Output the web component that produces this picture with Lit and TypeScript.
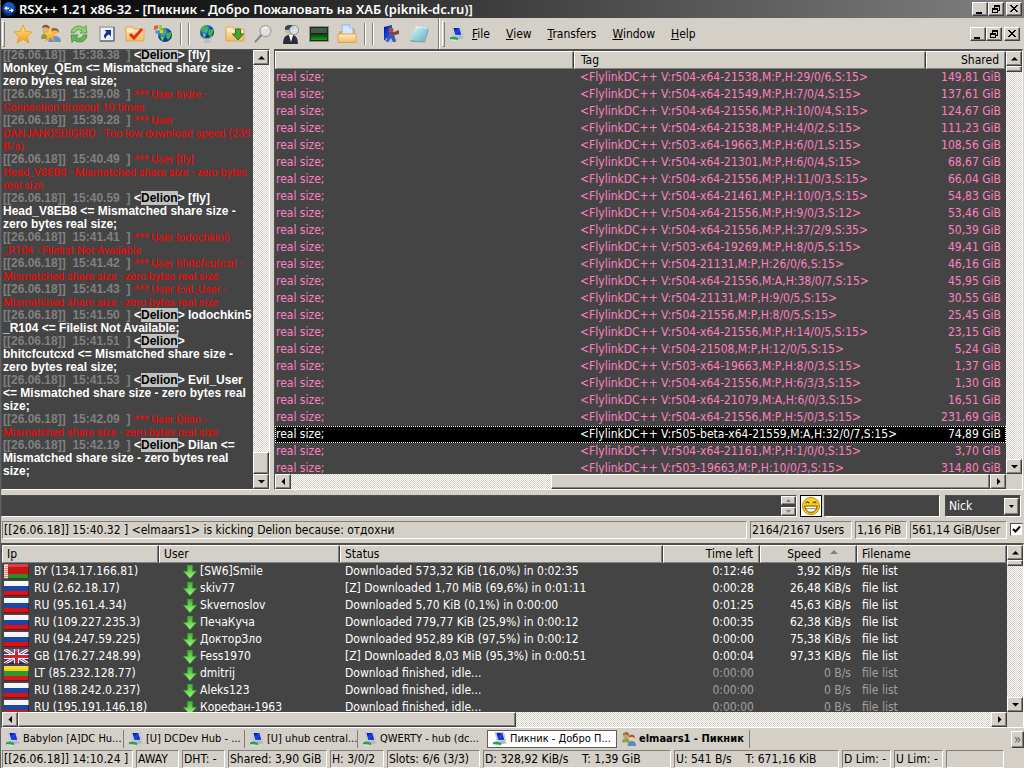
import { LitElement, html, css, svg, nothing } from "lit";
import { customElement, property } from "lit/decorators.js";
import { classMap } from "lit/directives/class-map.js";
import { styleMap } from "lit/directives/style-map.js";

const base = css`
  * { box-sizing: border-box; }
  svg { display: block; flex: none; }
  button { font: inherit; color: inherit; margin: 0; padding: 0; }
  .raised {
    background: #d4d0c8;
    border: 1px solid;
    border-color: #fff #404040 #404040 #fff;
    box-shadow: inset -1px -1px 0 #808080;
  }
  .center { display: flex; align-items: center; justify-content: center; }
`;

@customElement("scroll-bar")
class ScrollBar extends LitElement {
  @property({ type: Boolean, reflect: true }) horizontal = false;
  @property({ type: Number }) before = 0;
  @property({ type: Number }) size = 10;
  @property({ type: Number }) after = 90;
  static styles = [base, css`
    :host { display: flex; flex-direction: column; width: 16px; flex: none; background: repeating-conic-gradient(#fff 0 25%, #d4d0c8 0 50%) 0 0 / 2px 2px; }
    :host([horizontal]) { flex-direction: row; width: auto; height: 15px; }
    .arrow { width: 16px; height: 15px; flex: none; }
    .thumb { min-width: 6px; min-height: 6px; }
  `];
  render() {
    const arrow = (d: string, label: string) => html`<button class="arrow raised center" aria-label=${label}>
      <svg width="7" height="7" viewBox="0 0 7 7"><path d=${d} fill="#000"/></svg></button>`;
    const h = this.horizontal;
    return html`
      ${arrow(h ? "M5 0V7L1.5 3.5Z" : "M0 5.500H7L3.500 2Z", h ? "Scroll left" : "Scroll up")}
      <div style=${styleMap({ flex: `${this.before} 0 0` })}></div>
      <div class="thumb raised" style=${styleMap({ flex: `${this.size} 0 0` })}></div>
      <div style=${styleMap({ flex: `${this.after} 0 0` })}></div>
      ${arrow(h ? "M2 0V7L5.500 3.500Z" : "M0 2H7L3.500 5.500Z", h ? "Scroll right" : "Scroll down")}`;
  }
}

const defs = svg`<defs>
  <linearGradient id="gold" x2="0" y2="1"><stop stop-color="#ffe98a"/><stop offset="1" stop-color="#f09a1c"/></linearGradient>
  <linearGradient id="fold" x2="0" y2="1"><stop stop-color="#fdeec0"/><stop offset="1" stop-color="#f3b963"/></linearGradient>
  <radialGradient id="sea" cx=".35" cy=".3"><stop stop-color="#a8dcff"/><stop offset=".5" stop-color="#2b7fd8"/><stop offset="1" stop-color="#0a3a92"/></radialGradient>
  <linearGradient id="scr" x2="1" y2="1"><stop stop-color="#000f80"/><stop offset=".5" stop-color="#1746f0"/><stop offset="1" stop-color="#0b1c9c"/></linearGradient>
  <linearGradient id="pad" x2="1" y2="1"><stop stop-color="#e6fbfd"/><stop offset="1" stop-color="#57b3c4"/></linearGradient>
  <linearGradient id="leaf" x2="0" y2="1"><stop stop-color="#3fae2a"/><stop offset="1" stop-color="#a4f58a"/></linearGradient>
  <linearGradient id="grn" x2="0" y2="1"><stop stop-color="#0c2410"/><stop offset="1" stop-color="#1f9a18"/></linearGradient>
</defs>`;

const globe = svg`<circle cx="10" cy="8" r="7" fill="url(#sea)"/><path d="M5 3Q9 0 11 3L9 7L6 8L4 6ZM12 6L16 5Q17 9 13 13L11 10Z" fill="#3fb53c"/><path d="M6 9L9 10L8 14Q5 12 6 9Z" fill="#6ccb3f"/>`;
const folder = svg`<path d="M1 3H8L9 5H19V17H1Z" fill="url(#fold)" stroke="#e0a550"/><path d="M2 7H18" stroke="#fff6d8"/>`;

const icons: Record<string, unknown> = {
  star: svg`<path d="M10 1L12.500 7.300L19 8L14 12.300L16 19L10 15.300L4 19L6 12.300L1 8L7.500 7.300Z" fill="url(#gold)" stroke="#eda129"/>`,
  users: svg`<circle cx="5" cy="5" r="4" fill="#ddb07c"/><path d="M1 4Q2 0 6 1Q9 2 9 5Q5 2 1 4Z" fill="#7b5d2e"/><path d="M0 15Q0 9 5 9Q9 9 10 15Z" fill="#74a24c"/><circle cx="14" cy="8" r="4" fill="#f0c8a0"/><path d="M10 8Q10 3 14 4Q18 4 18 9Q15 5 10 8Z" fill="#a06a34"/><path d="M7 18Q8 12 14 12Q20 12 20 18Z" fill="#6d93c6"/><path d="M9 3L11 8L16 8.500L12 12L13.500 17L9 14L4.500 17L6 12L2 8.500L7 8Z" fill="url(#gold)" stroke="#e69a28" stroke-width=".6"/>`,
  refresh: svg`<path d="M2 9Q3 2 10 2Q13 2 15 4L17 1.500L18 9H11L13 6.500Q8 4 5.500 9Z" fill="#8fce72" stroke="#4c9b3e" stroke-width=".8"/><path d="M18 11Q17 18 10 18Q7 18 5 16L3 18.500L2 11H9L7 13.500Q12 16 14.500 11Z" fill="#63b552" stroke="#3d8935" stroke-width=".8"/>`,
  shortcut: svg`<rect x="3" y="3" width="14" height="14" fill="#eef1f6" stroke="#7d8796"/><path d="M3 17H17V3" fill="none" stroke="#4c5666"/><path d="M7.500 6H14V12.500L12 10.500Q8.500 12 8.500 15Q5 12 9.500 8Z" fill="#1c2f8c"/>`,
  check: svg`${folder}<path d="M5 10L9 14L17 5" fill="none" stroke="#e22e18" stroke-width="3"/>`,
  world: svg`<g transform="translate(2 3)">${globe}</g><path d="M1 2L5 1V5L1 6Z" fill="#ef5b2a"/><path d="M6 1L9 1V5L6 5Z" fill="#8ccc3d"/><path d="M2 7L6 6V9L3 10Z" fill="#4a90e0"/><path d="M7 6H10V9H7Z" fill="#f7c52f"/>`,
  globe: svg`${globe}<path d="M3 12Q9 18 16 12" fill="none" stroke="#a9aeb6" stroke-width="1.500"/><path d="M8 15H12L14 19H6Z" fill="#b8bdc4"/>`,
  folderdown: svg`${folder}<path d="M10.500 5H15.500V10H18.500L13 16L7.500 10H10.500Z" fill="#4ba32f" stroke="#2c7a1c"/>`,
  search: svg`<circle cx="12.500" cy="7" r="5.500" fill="#dfe1e0" stroke="#8e9194"/><path d="M9 5Q11 3 14 4" stroke="#fff" fill="none"/><path d="M8.500 11L2 18" stroke="#8a827a" stroke-width="2"/>`,
  spy: svg`<circle cx="9" cy="6" r="5" fill="#d0b59c"/><path d="M4 6Q3 1 9 1Q14 1 14 5Z" fill="#3a3f48"/><path d="M2 20Q2 11 8 11L10 14L12 11Q17 12 17 20Z" fill="#2a2e38"/><path d="M8 11L10 18L12 11Z" fill="#fff"/><circle cx="13" cy="6" r="4.500" fill="#d7e6f2" opacity=".9" stroke="#80878f"/>`,
  monitor: svg`<rect x="0.500" y="2.500" width="19" height="15" fill="#1d2b1d" stroke="#8a9088"/><rect x="2" y="4" width="16" height="6" fill="#425a4a"/><rect x="2" y="9" width="16" height="7" fill="url(#grn)"/>`,
  folderdoc: svg`<path d="M2 7H7L8 5H18V18H2Z" fill="#eaa94b"/><path d="M5 1H13L16 4V12H5Z" fill="#d3e6fa" stroke="#8bb5dc"/><path d="M13 1V4H16" fill="#fff" stroke="#8bb5dc"/><path d="M1 10H19V18.500H1Z" fill="url(#fold)" stroke="#e0a550"/>`,
  exit: svg`<path d="M3 3L11 1V18L3 16Z" fill="url(#scr)"/><path d="M4 15L12 12L17 16L9 19Z" fill="#b9bec8"/><circle cx="10" cy="6" r="2.500" fill="#a65238"/><path d="M8 8H13L18 6V10L14 11H8Z" fill="#7d4636"/><path d="M8 10H13L15 18H12L10 14L7 18H5Z" fill="#3d5aae"/>`,
  notepad: svg`<path d="M7 2L19 3L15 17L1 16Z" fill="url(#pad)"/><path d="M1 16L15 17L19 3L19.500 7L16 18.500L2 18Z" fill="#8ea4a9"/><path d="M7 3L18 4" stroke="#fff" stroke-dasharray="1 1"/>`,
  hub: svg`<path d="M3 0L15 0L18 12L6 13Z" fill="#d7dbe4" stroke="#b3b7c3"/><path d="M5 1.500H13.500L16 11L7.500 11.500Z" fill="url(#scr)"/><path d="M8 14L16 12L20 16L10 18Z" fill="#b4b8c2"/><path d="M0 15Q6 12 12 16L11 19Q4 18 0 18Z" fill="#27a05f"/><path d="M1 18L10 19" stroke="#fff"/>`,
  people: svg`<circle cx="6" cy="5" r="4.500" fill="#cda06a"/><path d="M1 5Q1 0 7 0Q11 2 10 6Q6 2 1 5Z" fill="#8a7531"/><path d="M0 15Q0 9 6 9Q11 9 11 15Z" fill="#83a848"/><circle cx="14" cy="8" r="4" fill="#f0c79e"/><path d="M10 8Q10 3 15 4Q19 5 18 9Q15 5 10 8Z" fill="#93582a"/><path d="M8 20Q8 13 14 13Q20 13 20 20Z" fill="#5e89c4"/>`,
  app: svg`<circle cx="10" cy="10" r="10" fill="#0b2a78"/><circle cx="10" cy="8" r="8" fill="#1d57c4"/><path d="M3 9L7 6V8H10V10H7V12ZM17 12L13 9V11H10V13H13V15Z" fill="#fff"/>`,
  smile: svg`<circle cx="10" cy="10" r="9.500" fill="#fcd116" stroke="#b77b00"/><path d="M4 7Q6 4 8 7M12 7Q14 4 16 7" fill="none" stroke="#5b3c00" stroke-width="1.300"/><path d="M3 10H17Q16 17 10 17Q4 17 3 10Z" fill="#fff" stroke="#5b3c00"/><path d="M4 13H16" stroke="#5b3c00" stroke-width=".7"/>`,
  down: svg`<path d="M6.500 0H13.500V9H19.500L10 19.500L.5 9H6.500Z" fill="url(#leaf)" stroke="#2fa01f"/>`,
};

const icon = (name: string, size: number) => html`<svg width=${size} height=${size} viewBox="0 0 20 20" aria-hidden="true">${defs}${icons[name]}</svg>`;

const flag = (code: string) => {
  const stripes = (a: string, b: string, c: string) => svg`<path d="M0 0H25V5H0Z" fill=${a}/><path d="M0 5H25V10H0Z" fill=${b}/><path d="M0 10H25V15H0Z" fill=${c}/>`;
  const art =
    code === "RU" ? stripes("#f4f4f4", "#1c46a6", "#e01010")
    : code === "LT" ? stripes("#f7d00c", "#2c9a34", "#d81818")
    : code === "BY" ? svg`<path d="M0 0H25V10H0Z" fill="#c81414"/><path d="M0 10H25V15H0Z" fill="#2c8a2c"/><path d="M0 0H4V15H0Z" fill="#f2dcdc"/><path d="M1 0V15M3 0V15" stroke="#d43030" stroke-dasharray="1 1"/>`
    : svg`<path d="M0 0H25V15H0Z" fill="#2b3f94"/><path d="M0 0L25 15M25 0L0 15" stroke="#fff" stroke-width="3"/><path d="M0 0L25 15M25 0L0 15" stroke="#d8202c"/><path d="M12.500 0V15M0 7.500H25" stroke="#fff" stroke-width="5"/><path d="M12.500 0V15M0 7.500H25" stroke="#d8202c" stroke-width="3"/>`;
  return html`<svg width="25" height="15" viewBox="0 0 25 15" aria-hidden="true">${art}<path d="M0 1.500H25" stroke="#fff" stroke-width="3" opacity=".2"/><path d="M0 14.500H24.500V0" fill="none" stroke="#000" opacity=".4"/></svg>`;
};

@customElement("window-controls")
class WindowControls extends LitElement {
  static styles = [base, css`
    :host { display: flex; flex: none; }
    button { width: 16px; height: 14px; }
    button:last-child { margin-left: 2px; }
  `];
  render() {
    const b = (label: string, d: string) => html`<button class="raised center" aria-label=${label}>
      <svg width="10" height="10" viewBox="0 0 10 10"><path d=${d} fill="none" stroke="#000" shape-rendering="crispEdges"/></svg></button>`;
    return html`${b("Minimize", "M1 8H7M1 9H7")}
      ${b("Restore", "M3.500 4V1.500H8.500V6.500H7M3 2.500H9M1.500 4.500H6.500V8.500H1.500ZM1 5.500H7")}
      ${b("Close", "M1 1L8 8M2 1L9 8M8 1L1 8M9 1L2 8")}`;
  }
}

@customElement("hub-chat")
class HubChat extends LitElement {
  static styles = [base, css`
    :host { display: flex; min-height: 0; background: #444; }
    .log { flex: 1; min-width: 0; overflow: hidden; display: flex; flex-direction: column; justify-content: flex-end; padding: 0 0 11px 1px; font: 12px/13px "Liberation Sans", Arial, sans-serif; white-space: pre; }
    .line { display: flex; flex: none; height: 13px; color: #fff; font-weight: bold; }
    .red { color: #f00; font: 11px/13px Roboto, sans-serif; }
    .time { flex: none; width: 131px; color: #808080; font: bold 12px/13px "Liberation Sans", Arial, sans-serif; }
    .nick { background: #c0c0c0; color: #000; }
  `];
  render() {
    const t = (time: string) => html`<span class="time">[[26.06.18]]  ${time}  ]</span>`;
    const say = (time: string, first: string, ...rest: string[]) => html`
      <div class="line">${t(time)}<span>&lt;<span class="nick">Delion</span>&gt; ${first}</span></div>
      ${rest.map((r) => html`<div class="line">${r}</div>`)}`;
    const sys = (time: string, first: string, ...rest: string[]) => html`
      <div class="line red">${t(time)}<span>*** User ${first}</span></div>
      ${rest.map((r) => html`<div class="line red">${r}</div>`)}`;
    const mis = "Mismatched share size - zero bytes real size";
    return html`<div class="log">
        ${say("15:38.38", "[fly]", "Monkey_QEm <= Mismatched share size -", "zero bytes real size;")}
        ${sys("15:39.08", "Indre -", "Connection timeout 10 times")}
        ${sys("15:39.28", "", "DANJANOSDIGIRO - Too low download speed (239", "B/s)")}
        ${sys("15:40.49", "[fly]", "Head_V8EB8 - Mismatched share size - zero bytes", "real size")}
        ${say("15:40.59", "[fly]", "Head_V8EB8 <= Mismatched share size -", "zero bytes real size;")}
        ${sys("15:41.41", "lodochkin5", "_R104 - Filelist Not Available")}
        ${sys("15:41.42", "bhitcfcutcxd -", mis)}
        ${sys("15:41.43", "Evil_User -", mis)}
        ${say("15:41.50", "lodochkin5", "_R104 <= Filelist Not Available;")}
        ${say("15:41.51", "", "bhitcfcutcxd <= Mismatched share size -", "zero bytes real size;")}
        ${say("15:41.53", "Evil_User", "<= Mismatched share size - zero bytes real", "size;")}
        ${sys("15:42.09", "Dilan -", mis)}
        ${say("15:42.19", "Dilan <=", "Mismatched share size - zero bytes real", "size;")}
      </div>
      <scroll-bar .before=${390} .size=${20} .after=${0}></scroll-bar>`;
  }
}

const tableStyles = css`
  :host { display: flex; flex-direction: column; min-width: 0; min-height: 0; background: #444; font: 12px/17px "DejaVu Sans Condensed", "Noto Sans", sans-serif; }
  .body { flex: 1; display: flex; min-height: 0; }
  .view { flex: 1; min-width: 0; overflow: hidden; }
  .foot { display: flex; background: #d4d0c8; }
  .foot scroll-bar { flex: 1; }
  .corner { width: 16px; }
  table { width: 100%; table-layout: fixed; border-collapse: separate; border-spacing: 0; }
  th { height: 18px; padding: 0 6px; font-weight: normal; text-align: left; line-height: 16px; color: #000; background: #d4d0c8; border: 1px solid; border-color: #fff #404040 #808080 #fff; box-shadow: inset -1px 0 0 #808080; }
  td { height: 17px; padding: 0 6px; white-space: nowrap; overflow: hidden; }
  .num { text-align: right; }
`;

const userRows: [string, string][] = [
  ["r504-x64-21538,M:P,H:29/0/6,S:15", "149,81"], ["r504-x64-21549,M:P,H:7/0/4,S:15", "137,61"],
  ["r504-x64-21556,M:P,H:10/0/4,S:15", "124,67"], ["r504-x64-21538,M:P,H:4/0/2,S:15", "111,23"],
  ["r503-x64-19663,M:P,H:6/0/1,S:15", "108,56"], ["r504-x64-21301,M:P,H:6/0/4,S:15", "68,67"],
  ["r504-x64-21556,M:P,H:11/0/3,S:15", "66,04"], ["r504-x64-21461,M:P,H:10/0/3,S:15", "54,83"],
  ["r504-x64-21556,M:P,H:9/0/3,S:12", "53,46"], ["r504-x64-21556,M:P,H:37/2/9,S:35", "50,39"],
  ["r503-x64-19269,M:P,H:8/0/5,S:15", "49,41"], ["r504-21131,M:P,H:26/0/6,S:15", "46,16"],
  ["r504-x64-21556,M:A,H:38/0/7,S:15", "45,95"], ["r504-21131,M:P,H:9/0/5,S:15", "30,55"],
  ["r504-21556,M:P,H:8/0/5,S:15", "25,45"], ["r504-x64-21556,M:P,H:14/0/5,S:15", "23,15"],
  ["r504-21508,M:P,H:12/0/5,S:15", "5,24"], ["r503-x64-19663,M:P,H:8/0/3,S:15", "1,37"],
  ["r504-x64-21556,M:P,H:6/3/3,S:15", "1,30"], ["r504-x64-21079,M:A,H:6/0/3,S:15", "16,51"],
  ["r504-x64-21556,M:P,H:5/0/3,S:15", "231,69"], ["r505-beta-x64-21559,M:A,H:32/0/7,S:15", "74,89"],
  ["r504-x64-21161,M:P,H:1/0/0,S:15", "3,70"], ["r503-19663,M:P,H:10/0/3,S:15", "314,80"],
];

@customElement("user-list")
class UserList extends LitElement {
  static styles = [base, tableStyles, css`
    td { color: #ff80c0; }
    td:first-child { padding-left: 1px; }
    td.num { padding-right: 5px; }
    .c-tag { width: 352px; }
    .c-shared { width: 80px; }
    .sel { outline: 1px dotted #fff; outline-offset: -1px; }
    .sel td { background: #000; color: #fff; }
  `];
  render() {
    return html`<div class="body"><div class="view"><table>
        <colgroup><col><col class="c-tag"><col class="c-shared"></colgroup>
        <thead><tr><th></th><th>Tag</th><th class="num">Shared</th></tr></thead>
        <tbody>${userRows.map(([tag, size], i) => html`<tr class=${classMap({ sel: i === 21 })}>
          <td>real size;</td><td>&lt;FlylinkDC++ V:${tag}&gt;</td><td class="num">${size} GiB</td></tr>`)}</tbody>
      </table></div><scroll-bar .size=${1} .after=${99}></scroll-bar></div>
      <div class="foot"><scroll-bar horizontal .before=${262} .size=${440} .after=${0}></scroll-bar><div class="corner"></div></div>`;
  }
}

const transfers: string[][] = [
  ["BY", "134.17.166.81", "[SW6]Smile", "Downloaded 573,32 KiB (16,0%) in 0:02:35", "0:12:46", "3,92 KiB/s"],
  ["RU", "2.62.18.17", "skiv77", "[Z] Downloaded 1,70 MiB (69,6%) in 0:01:11", "0:00:28", "26,48 KiB/s"],
  ["RU", "95.161.4.34", "Skvernoslov", "Downloaded 5,70 KiB (0,1%) in 0:00:00", "0:01:25", "45,63 KiB/s"],
  ["RU", "109.227.235.3", "ПечаКуча", "Downloaded 779,77 KiB (25,9%) in 0:00:12", "0:00:35", "62,38 KiB/s"],
  ["RU", "94.247.59.225", "ДокторЗло", "Downloaded 952,89 KiB (97,5%) in 0:00:12", "0:00:00", "75,38 KiB/s"],
  ["GB", "176.27.248.99", "Fess1970", "[Z] Downloaded 8,03 MiB (95,3%) in 0:00:51", "0:00:04", "97,33 KiB/s"],
  ["LT", "85.232.128.77", "dmitrij", "Download finished, idle...", "0:00:00", "0 B/s"],
  ["RU", "188.242.0.237", "Aleks123", "Download finished, idle...", "0:00:00", "0 B/s"],
  ["RU", "195.191.146.18", "Корефан-1963", "Download finished, idle...", "0:00:00", "0 B/s"],
];

@customElement("transfer-list")
class TransferList extends LitElement {
  static styles = [base, tableStyles, css`
    th { padding-left: 4px; }
    td { color: #fff; padding-left: 5px; }
    .c-ip { width: 157px; } .c-user { width: 181px; } .c-status { width: 323px; } .c-time, .c-speed { width: 97px; }
    .cell { display: flex; align-items: center; height: 17px; gap: 5px; }
    td:first-child { padding-left: 2px; }
    td:nth-child(2) { padding-left: 24px; }
    .cell.user { gap: 3px; }
    .idle .dim { color: #a0a0a0; }
    .arrow { display: inline-block; margin: 0 12px 4px 9px; border: 4px solid transparent; border-top: 0; border-bottom-color: #808080; }
  `];
  render() {
    return html`<div class="body"><div class="view"><table>
        <colgroup><col class="c-ip"><col class="c-user"><col class="c-status"><col class="c-time"><col class="c-speed"><col></colgroup>
        <thead><tr><th>Ip</th><th>User</th><th>Status</th><th class="num">Time left</th><th class="num">Speed<span class="arrow"></span></th><th>Filename</th></tr></thead>
        <tbody>${transfers.map(([cc, ip, user, status, left, speed]) => html`<tr class=${classMap({ idle: speed === "0 B/s" })}>
          <td><div class="cell">${flag(cc)}<span>${cc} (${ip})</span></div></td>
          <td><div class="cell user">${icon("down", 14)}<span>${user}</span></div></td>
          <td>${status}</td><td class="num dim">${left}</td><td class="num dim">${speed}</td><td class="dim">file list</td></tr>`)}</tbody>
      </table></div><scroll-bar .size=${1} .after=${99}></scroll-bar></div>
      <div class="foot"><scroll-bar horizontal .before=${0} .size=${498} .after=${476}></scroll-bar><div class="corner"></div></div>`;
  }
}

@customElement("app-root")
class AppRoot extends LitElement {
  static styles = [base, css`
    :host { display: flex; flex-direction: column; height: 100vh; overflow: hidden; background: #d4d0c8; color: #000; border-left: 1px solid #606060; font: 12px/16px "DejaVu Sans Condensed", "Noto Sans", sans-serif; white-space: nowrap; }
    .title { display: flex; align-items: center; gap: 3px; height: 18px; padding: 0 2px 0 1px; background: linear-gradient(90deg, #000, #808080); color: #fff; }
    .title h1 { flex: 1; margin: 0; font: 600 13px/18px "Noto Sans", sans-serif; }
    .bar { display: flex; align-items: center; height: 31px; padding: 0 4px 0 1px; }
    .grip { width: 3px; height: 26px; border: 1px solid; border-color: #fff #808080 #808080 #fff; }
    .tools { display: flex; align-items: center; padding: 0 3px 0 4px; }
    .tool { width: 28px; height: 28px; border: 0; background: none; }
    .sep { width: 2px; height: 22px; margin: 0 3px; border-left: 1px solid #808080; border-right: 1px solid #fff; }
    .sep.tall { height: 31px; margin: 0 2px; }
    .menu { display: flex; flex: 1; align-items: center; padding-left: 5px; }
    .menu button { border: 0; background: none; padding: 0 8px; }
    .main { display: flex; flex: 1; min-height: 0; gap: 4px; padding-right: 1px; }
    .sunk { border: 1px solid; border-color: #505050 #fff #fff #505050; }
    .deep { border-top: 2px solid #505050; }
    hub-chat { width: 269px; flex: none; }
    user-list { flex: 1; }
    .entry { display: flex; align-items: center; height: 22px; margin: 5px 0 4px; padding-right: 3px; }
    .message { display: flex; flex: 1; height: 22px; background: #444; margin-right: 3px; }
    textarea, input[type="text"] { min-width: 0; border: 0; background: #444; color: #fff; font: inherit; resize: none; padding: 2px; outline: none; }
    textarea { flex: 1; height: 20px; }
    .spin { display: flex; flex-direction: column; gap: 2px; width: 15px; }
    .spin button { height: 9px; }
    .smile { width: 22px; height: 22px; background: #fff; border: 1px solid #000; }
    input.filter { width: 116px; height: 22px; margin: 0 5px 0 2px; border: 1px solid; border-color: #505050 #fff #fff #505050; }
    .combo { display: grid; width: 76px; height: 22px; background: #444; }
    .combo > * { grid-area: 1 / 1; }
    select { appearance: none; border: 0; background: #444; color: #fff; font: inherit; padding: 0 3px; }
    .drop { width: 15px; height: 17px; justify-self: end; align-self: center; margin-right: 1px; pointer-events: none; }
    .info { display: flex; gap: 3px; height: 18px; margin: 0 1px 4px 1px; }
    .cell { border: 1px solid; border-color: #808080 #fff #fff #808080; padding: 0 1px; line-height: 17px; overflow: hidden; flex: none; white-space: pre; }
    .grow { flex: 1; }
    input[type="checkbox"] { appearance: none; width: 13px; height: 13px; margin: 2px 0 0; background: #fff; border: 1px solid; border-color: #505050 #d4d0c8 #d4d0c8 #505050; }
    .checkbox { display: grid; }
    .checkbox > * { grid-area: 1 / 1; }
    .checkbox svg { margin: 4px 0 0 2px; pointer-events: none; }
    transfer-list { height: 185px; flex: none; }
    .tabs { display: flex; align-items: center; height: 22px; font: 11px/18px "DejaVu Sans Condensed", "Noto Sans", sans-serif; }
    .tab { display: flex; align-items: center; gap: 3px; height: 18px; padding-left: 5px; border: 0; border-right: 1px solid #808080; background: none; flex: none; }
    .tab.on { background: #fff; border: 1px solid #606060; }
    .tab.last { border-right: 0; }
    .tab.bold { font-weight: bold; }
    .more { margin-left: auto; width: 13px; height: 17px; color: #606060; font-size: 14px; }
    .status { display: flex; gap: 3px; height: 18px; padding-left: 1px; }
  `];
  render() {
    const tools = (...names: string[]) => names.map((n) => n === "|" ? html`<div class="sep"></div>` : html`<button class="tool center" aria-label=${n}>${icon(n, 20)}</button>`);
    const menu = ["File", "View", "Transfers", "Window", "Help"];
    const tabs: [string, string, number, string][] = [
      ["hub", "Babylon [A]DC Hu...", 123, ""], ["hub", "[U] DCDev Hub - ...", 121, ""],
      ["hub", "[U] uhub central...", 113, ""], ["hub", "QWERTY - hub (dc...", 129, "last"],
      ["hub", "Пикник - Добро П...", 130, "on"], ["people", "elmaars1 - Пикник", 133, "bold"],
    ];
    const status: [string, number][] = [
      ["[[26.06.18]] 14:10.24 ]", 131], ["AWAY", 43], ["DHT: -", 43], ["Shared: 3,90 GiB", 99], ["H: 3/0/2", 54],
      ["Slots: 6/6 (3/3)", 93], ["D: 328,92 KiB/s    T: 1,39 GiB", 188], ["U: 541 B/s    T: 671,16 KiB", 165],
      ["D Lim: -", 49], ["U Lim: -", 49], ["", 58],
    ];
    return html`
      <header class="title">${icon("app", 14)}<h1>RSX++ 1.21 x86-32 - [Пикник - Добро Пожаловать на ХАБ (piknik-dc.ru)]</h1><window-controls></window-controls></header>
      <div class="bar">
        <div class="grip"></div>
        <div class="tools">${tools("star", "users", "refresh", "shortcut", "check", "world", "|", "|", "globe", "folderdown", "search", "spy", "monitor", "folderdoc", "|", "|", "exit", "notepad")}</div>
        <div class="sep tall"></div><div class="grip"></div>
        <nav class="menu">${icon("hub", 14)}${menu.map((m) => html`<button><u>${m[0]}</u>${m.slice(1)}</button>`)}</nav>
        <window-controls></window-controls>
      </div>
      <div class="main"><hub-chat class="sunk"></hub-chat><user-list class="sunk deep"></user-list></div>
      <div class="entry">
        <div class="message sunk"><textarea aria-label="Message"></textarea>
          <div class="spin"><button class="raised center" aria-label="Previous"><svg width="5" height="3"><path d="M0 3H5L2.500 0Z" fill="#808080"/></svg></button>
          <button class="raised center" aria-label="Next"><svg width="5" height="3"><path d="M0 0H5L2.500 3Z" fill="#808080"/></svg></button></div></div>
        <button class="smile center" aria-label="Emoticons">${icon("smile", 18)}</button>
        <input class="filter" type="text" aria-label="Filter">
        <div class="combo sunk"><select aria-label="Filter column"><option>Nick</option></select>
          <div class="drop raised center"><svg width="5" height="3"><path d="M0 0H5L2.500 3Z"/></svg></div></div>
      </div>
      <div class="info">
        <div class="cell grow">[[26.06.18]] 15:40.32 ] &lt;elmaars1&gt; is kicking Delion because: отдохни</div>
        <div class="cell" style=${styleMap({ width: "102px" })}>2164/2167 Users</div>
        <div class="cell" style=${styleMap({ width: "52px" })}>1,16 PiB</div>
        <div class="cell" style=${styleMap({ width: "97px" })}>561,14 GiB/User</div>
        <label class="checkbox"><input type="checkbox" checked aria-label="Show user list"><svg width="9" height="9" viewBox="0 0 9 9"><path d="M1 4L3.500 6.500L8 1.500" fill="none" stroke="#000" stroke-width="2"/></svg></label>
      </div>
      <transfer-list class="sunk deep"></transfer-list>
      <nav class="tabs">${tabs.map(([i, label, w, kind]) => html`<button class=${classMap({ tab: true, last: kind === "last", on: kind === "on", bold: kind === "bold" })} style=${styleMap({ width: `${w}px` })}>${icon(i, 14)}${label}</button>`)}
        <button class="more raised center" aria-label="More tabs">»</button></nav>
      <footer class="status">${status.map(([s, w]) => html`<div class="cell" style=${styleMap({ width: `${w}px` })}>${s || nothing}</div>`)}</footer>`;
  }
}
